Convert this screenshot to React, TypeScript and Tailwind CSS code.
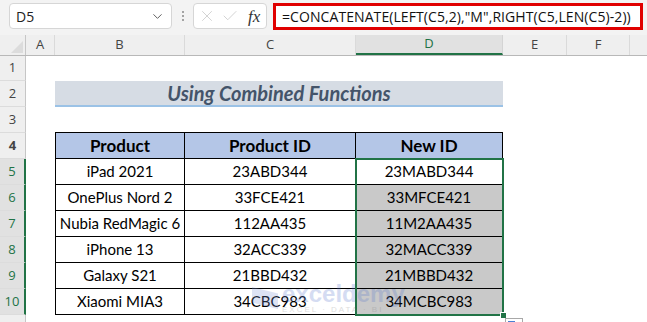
import { ChevronDown, X, Check } from 'lucide-react';

const rows = [
  ['iPad 2021', '23ABD344', '23MABD344'],
  ['OnePlus Nord 2', '33FCE421', '33MFCE421'],
  ['Nubia RedMagic 6', '112AA435', '11M2AA435'],
  ['iPhone 13', '32ACC339', '32MACC339'],
  ['Galaxy S21', '21BBD432', '21MBBD432'],
  ['Xiaomi MIA3', '34CBC983', '34MCBC983'],
];

const uiFont = "font-['Open_Sans','Noto_Sans',sans-serif]";
const cellFont = "font-['Lato','Noto_Sans',sans-serif]";

function RowHead({ n, selected }: { n?: number; selected?: boolean }) {
  return (
    <div
      className={`w-[26px] shrink-0 flex items-center justify-center text-[13px] ${uiFont} ${
        selected
          ? 'bg-[#e1e1e1] text-[#217346] border-r-2 border-[#217346]'
          : 'bg-[#efefef] text-[#444] border-r border-[#c6c6c6]'
      } border-b border-b-[#dcdcdc]`}
    >
      {n}
    </div>
  );
}

function Toolbar() {
  return (
    <div className="h-[35px] bg-[#f3f3f3] flex items-start pt-[3px] pl-[9px] pr-[4px]">
      {/* Name box */}
      <div className="w-[163px] h-[26px] bg-white border border-[#d6d6d6] rounded-[4px] flex items-center justify-between pl-[6px] pr-[6px]">
        <span className={`text-[14px] text-[#222] ${uiFont}`}>D5</span>
        <ChevronDown size={15} strokeWidth={1.5} className="text-[#555]" />
      </div>
      {/* Dots */}
      <div className="w-[21px] h-[26px] flex flex-col items-center justify-center gap-[2px]">
        <span className="w-[2px] h-[2px] bg-[#888] rounded-full" />
        <span className="w-[2px] h-[2px] bg-[#888] rounded-full" />
        <span className="w-[2px] h-[2px] bg-[#888] rounded-full" />
      </div>
      {/* fx box */}
      <div className="w-[74px] h-[26px] bg-white border border-[#d6d6d6] rounded-[4px] flex items-center pl-[4px] gap-[2px]">
        <X size={18} strokeWidth={1} className="text-[#c4c4c4]" />
        <Check size={18} strokeWidth={1} className="text-[#c4c4c4] ml-[3px]" />
        <span className="ml-[7px] text-[17px] italic text-[#333] font-['Liberation_Serif',serif] leading-none">
          fx
        </span>
      </div>
      {/* Formula */}
      <div className="ml-[6px] flex-1 h-[27px] bg-white border-[3px] border-[#e00000] flex items-center pl-[6px]">
        <span className={`text-[14px] text-[#111] tracking-[0.08px] ${uiFont}`}>
          =CONCATENATE(LEFT(C5,2),"M",RIGHT(C5,LEN(C5)-2))
        </span>
      </div>
    </div>
  );
}

function ColumnHeaders() {
  const cols: [string, string][] = [
    ['A', 'w-[29px]'],
    ['B', 'w-[130px]'],
    ['C', 'w-[171px]'],
    ['D', 'w-[147px]'],
    ['E', 'w-[64px]'],
    ['F', 'w-[63px]'],
  ];
  return (
    <div className={`h-[21px] flex bg-[#efefef] border-b border-[#b8b8b8] ${uiFont}`}>
      <div className="w-[26px] shrink-0 border-r border-[#c6c6c6] flex items-end justify-end p-[2px]">
        <div className="w-0 h-0 border-l-[12px] border-l-transparent border-b-[12px] border-b-[#dcdcdc]" />
      </div>
      {cols.map(([c, w]) =>
        c === 'D' ? (
          <div
            key={c}
            className={`${w} shrink-0 bg-[#e1e1e1] text-[#217346] border-b-2 border-[#217346] border-r border-r-[#d4d4d4] flex items-center justify-center text-[13px]`}
          >
            {c}
          </div>
        ) : (
          <div
            key={c}
            className={`${w} shrink-0 text-[#444] border-r border-[#dadada] flex items-center justify-center text-[13px]`}
          >
            {c}
          </div>
        )
      )}
      <div className="flex-1" />
    </div>
  );
}

export default function App() {
  return (
    <div className="w-[647px] h-[322px] overflow-hidden bg-white relative">
      <Toolbar />
      <ColumnHeaders />

      <div className="relative">
        {/* Row 1 */}
        <div className="h-[25px] flex">
          <RowHead n={1} />
        </div>

        {/* Row 2: title */}
        <div className="h-[26px] flex">
          <RowHead n={2} />
          <div className="w-[29px] shrink-0" />
          <div className="w-[448px] shrink-0 bg-[#d6dce4] border-b-2 border-[#9bc2e6] flex items-center justify-center">
            <span className={`text-[20px] font-bold italic text-[#44546a] ${cellFont}`}>
              Using Combined Functions
            </span>
          </div>
        </div>

        {/* Row 3 */}
        <div className="h-[26px] flex">
          <RowHead n={3} />
          <div className="w-[29px] shrink-0" />
          <div className="w-[448px] shrink-0 self-end border-b border-black" />
        </div>

        {/* Row 4: table header */}
        <div className={`h-[26px] flex ${cellFont} text-[17px] font-bold text-black`}>
          <RowHead n={4} />
          <div className="w-[29px] shrink-0" />
          <div className="w-[130px] shrink-0 bg-[#b4c6e7] border-l border-r border-b border-black flex items-center justify-center">
            Product
          </div>
          <div className="w-[171px] shrink-0 bg-[#b4c6e7] border-r border-b border-black flex items-center justify-center">
            Product ID
          </div>
          <div className="w-[147px] shrink-0 bg-[#b4c6e7] border-r border-b border-black flex items-center justify-center">
            New ID
          </div>
        </div>

        {/* Data rows */}
        {rows.map(([p, id, nid], i) => (
          <div key={p} className={`h-[26px] flex ${cellFont} text-[15px] text-black`}>
            <RowHead n={i + 5} selected />
            <div className="w-[29px] shrink-0" />
            <div className="w-[130px] shrink-0 border-l border-r border-b border-black flex items-center justify-center">
              {p}
            </div>
            <div className="w-[171px] shrink-0 border-r border-b border-black flex items-center justify-center">
              {id}
            </div>
            <div
              className={`w-[147px] shrink-0 border-r border-b border-black flex items-center justify-center ${
                i === 0 ? 'bg-white' : 'bg-[#c9c9c9]'
              }`}
            >
              {nid}
            </div>
          </div>
        ))}

        {/* Row 11 (cut off) */}
        <div className="h-[26px] flex">
          <RowHead />
        </div>

        {/* Selection D5:D10 */}
        <div className="absolute left-[355px] top-[102px] w-[149px] h-[158px] border-2 border-[#217346] pointer-events-none" />
        <div className="absolute left-[500px] top-[256px] w-[7px] h-[7px] bg-[#217346] border border-white" />
        {/* Quick analysis button */}
        <div className="absolute left-[505px] top-[262px] w-[18px] h-[14px] bg-white border border-[#a8a8a8] p-[2px]">
          <div className="w-[7px] h-[6px] bg-[#4a7fd4]" />
        </div>

        {/* Watermark */}
        <div className="absolute left-[252px] top-[226px] flex items-center gap-[4px] opacity-25 pointer-events-none">
          <div className="w-[26px] h-[22px] bg-[#7a93d6] [clip-path:polygon(0_0,100%_30%,100%_100%,0_70%)]" />
          <div className="flex flex-col leading-none">
            <span className="text-[24px] font-bold text-[#5a78cc] font-['Liberation_Sans',sans-serif]">exceldemy</span>
            <span className="text-[8px] tracking-[2px] text-[#7a7a7a] font-['Liberation_Sans',sans-serif]">
              EXCEL · DATA · BI
            </span>
          </div>
        </div>
      </div>
    </div>
  );
}
